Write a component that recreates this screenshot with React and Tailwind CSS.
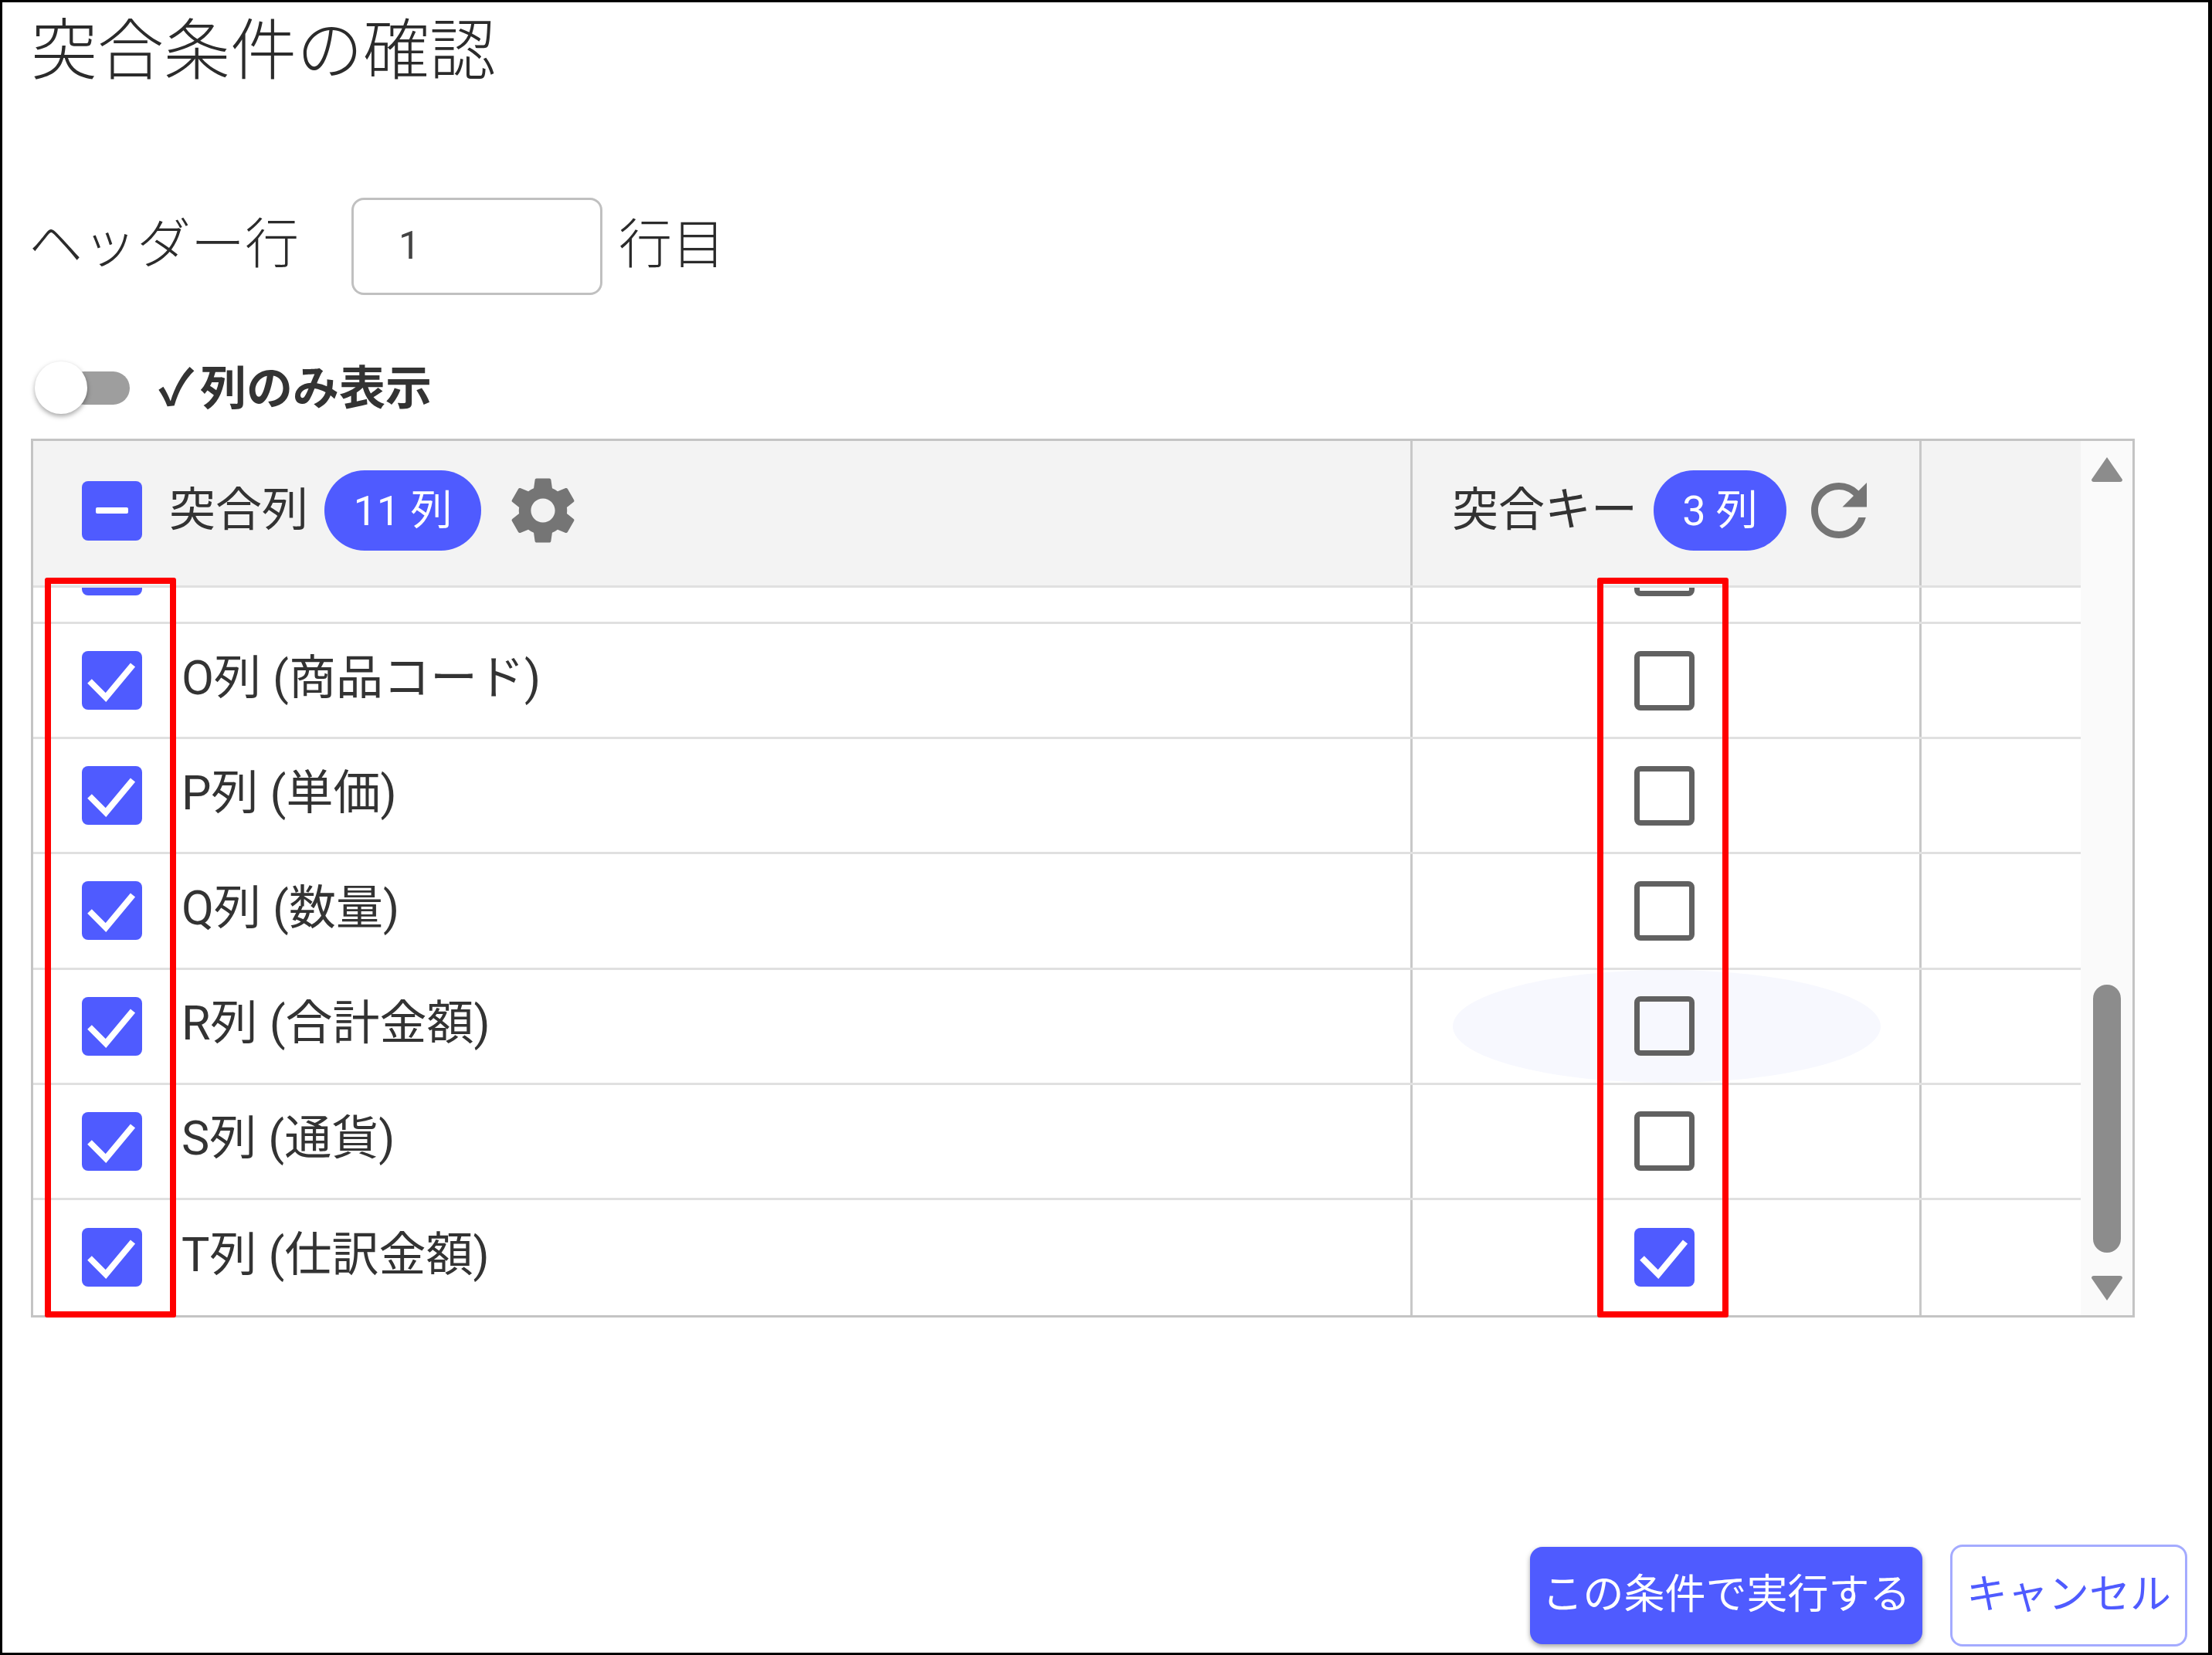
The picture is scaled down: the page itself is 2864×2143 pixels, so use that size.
import { MdSettings, MdRefresh } from "react-icons/md";

const rows = [
  { label: "O列 (商品コード)", key: false },
  { label: "P列 (単価)", key: false },
  { label: "Q列 (数量)", key: false },
  { label: "R列 (合計金額)", key: false, hover: true },
  { label: "S列 (通貨)", key: false },
  { label: "T列 (仕訳金額)", key: true },
];

const Checkbox = ({ checked, indeterminate, className = "" }) => {
  if (indeterminate) {
    return (
      <span className={`flex h-[77px] w-[78px] shrink-0 items-center justify-center rounded-[8px] bg-[#4f5bff] ${className}`}>
        <span className="h-[8px] w-[42px] rounded-[2px] bg-white" />
      </span>
    );
  }
  if (checked) {
    return (
      <span className={`block h-[76px] w-[78px] shrink-0 rounded-[8px] bg-[#4f5bff] ${className}`}>
        <svg viewBox="0 0 78 76" className="h-full w-full" fill="none" stroke="#fff" strokeWidth="8">
          <path d="M10 39 L31 60 L66 18" />
        </svg>
      </span>
    );
  }
  return <span className={`block h-[77px] w-[78px] shrink-0 rounded-[8px] border-[7px] border-[#616161] ${className}`} />;
};

const Pill = ({ children, className = "" }) => (
  <span className={`flex h-[104px] items-center justify-center rounded-full bg-[#4f5bff] text-[54px] text-white ${className}`}>
    {children}
  </span>
);

const App = () => {
  return (
    <div className="relative flex h-[2143px] w-[2864px] flex-col border-y-[3px] border-r-[5px] border-l-[3px] border-black bg-white pl-[37px] pr-[27px] pb-[8px] font-['Roboto','Noto_Sans_CJK_JP',sans-serif] text-[#333]">
      <h1 className="mt-[4px] h-[120px] text-[86px] leading-[120px] font-light text-[#2b2b2b]">突合条件の確認</h1>

      <div className="mt-[129px] flex h-[126px] items-center">
        <span className="-ml-[3px] w-[418px] pb-[3px] text-[70px] font-light text-[#2b2b2b]">ヘッダー行</span>
        <input
          readOnly
          value="1"
          className="h-[126px] w-[325px] rounded-[16px] border-[3px] border-[#c0c0c0] pb-[3px] pl-[58px] text-[50px] text-[#444] outline-none"
        />
        <span className="ml-[21px] pb-[3px] text-[69px] font-light text-[#2b2b2b]">行目</span>
      </div>

      <div className="mt-[85px] flex h-[70px] items-center">
        <span className="relative ml-[5px] block h-[43px] w-[123px]">
          <span className="absolute top-0 right-0 h-[43px] w-[80px] rounded-full bg-[#9e9e9e]" />
          <span className="absolute top-[-13px] left-0 h-[68px] w-[68px] rounded-full bg-white shadow-[0_3px_6px_rgba(0,0,0,0.35)]" />
        </span>
        <span className="ml-[37px] flex items-center pt-[4px] text-[60px] font-bold">
          <span className="w-[54px] text-[64px] font-bold">✓</span>列のみ表示
        </span>
      </div>

      <div className="mt-[31px] flex h-[1138px] w-[2724px] border-[3px] border-[#c4c4c4]">
        <div className="flex w-[2651px] flex-col overflow-hidden">
          <div className="grid h-[190px] shrink-0 grid-cols-[1786px_659px_206px] border-b-[3px] border-[#e0e0e0] bg-[#f3f3f3]">
            <div className="flex items-center border-r-[3px] border-[#c8c8c8] pb-[7px] pl-[63px]">
              <Checkbox indeterminate />
              <span className="ml-[35px] text-[60px]">突合列</span>
              <Pill className="ml-[21px] w-[203px]">11 列</Pill>
              <MdSettings className="ml-[28px] text-[#757575]" size={104} />
            </div>
            <div className="flex items-center border-r-[3px] border-[#c8c8c8] pb-[7px] pl-[51px]">
              <span className="text-[60px]">突合キー</span>
              <Pill className="ml-[21px] w-[172px]">3 列</Pill>
              <MdRefresh className="ml-[14px] text-[#757575]" size={108} />
            </div>
            <div />
          </div>

          {/* 途中までスクロールされた行 */}
          <div className="grid h-[47px] shrink-0 grid-cols-[1786px_659px_206px] overflow-hidden border-b-[3px] border-[#e0e0e0]">
            <div className="border-r-[3px] border-[#c8c8c8] pl-[63px]">
              <Checkbox checked className="-mt-[66px]" />
            </div>
            <div className="flex justify-center border-r-[3px] border-[#c8c8c8] pr-[4px]">
              <Checkbox className="-mt-[66px]" />
            </div>
            <div />
          </div>

          <div className="grid flex-1 grid-rows-6">
            {rows.map((row) => (
              <div key={row.label} className="grid grid-cols-[1786px_659px_206px] border-b-[3px] border-[#e0e0e0] last:border-b-0">
                <div className="flex items-center border-r-[3px] border-[#c8c8c8] pl-[63px]">
                  <Checkbox checked />
                  <span className="ml-[51px] pb-[5px] text-[61px] whitespace-nowrap">{row.label}</span>
                </div>
                <div className="relative flex items-center justify-center border-r-[3px] border-[#c8c8c8] pr-[4px]">
                  {row.hover && <span className="absolute left-[52px] h-[146px] w-[554px] rounded-[50%] bg-[#f7f8fe]" />}
                  <Checkbox checked={row.key} className="relative" />
                </div>
                <div />
              </div>
            ))}
          </div>
        </div>

        {/* スクロールバー */}
        <div className="flex w-[67px] flex-col items-center bg-[#fafafa] pt-[20px] pb-[18px]">
          <svg viewBox="0 0 42 34" className="h-[34px] w-[42px]" fill="#8c8c8c">
            <path d="M21 1 L41 30 Q41 33 38 33 L4 33 Q1 33 1 30 Z" />
          </svg>
          <div className="mt-auto h-[347px] w-[36px] rounded-full bg-[#8c8c8c]" />
          <svg viewBox="0 0 42 34" className="mt-[29px] h-[34px] w-[42px]" fill="#8c8c8c">
            <path d="M21 33 L41 4 Q41 1 38 1 L4 1 Q1 1 1 4 Z" />
          </svg>
        </div>
      </div>

      <div className="mt-auto flex items-center justify-end gap-[36px]">
        <button className="h-[126px] w-[508px] rounded-[16px] bg-[#4f5bff] text-[53px] text-white shadow-[0_3px_6px_rgba(0,0,0,0.35)]">
          この条件で実行する
        </button>
        <button className="h-[132px] w-[307px] rounded-[16px] border-[3px] border-[#a4abff] bg-white text-[53px] text-[#4f5bff]">
          キャンセル
        </button>
      </div>

      {/* 赤枠の注釈 */}
      <div className="absolute top-[745px] left-[55px] h-[958px] w-[170px] rounded-[3px] border-[8px] border-[#ff0000]" />
      <div className="absolute top-[745px] left-[2065px] h-[958px] w-[170px] rounded-[3px] border-[8px] border-[#ff0000]" />
    </div>
  );
};

export default App;
